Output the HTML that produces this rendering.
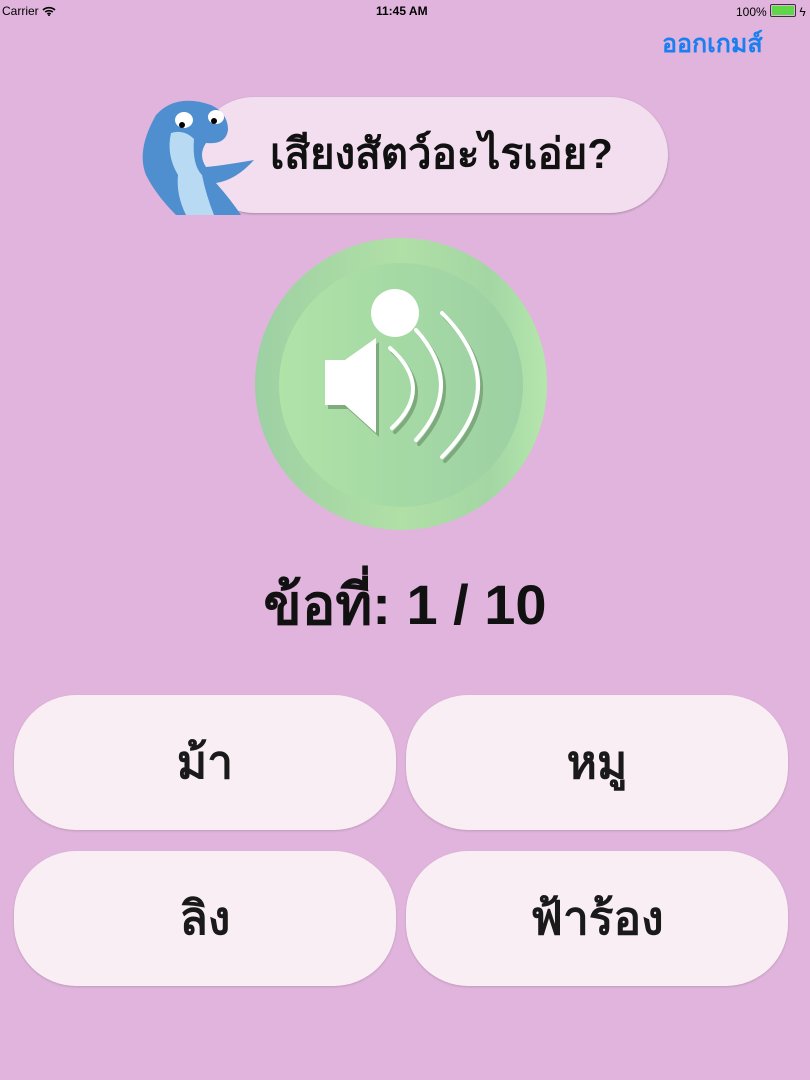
<!DOCTYPE html>
<html><head><meta charset="utf-8">
<style>
html,body{margin:0;padding:0}
body{width:810px;height:1080px;background:#e0b4dc;position:relative;overflow:hidden;font-family:"Liberation Sans","Noto Sans CJK SC",sans-serif}
.sb{position:absolute;top:4px;font-size:12px;color:#000}
.btn{position:absolute;width:382px;height:135px;border-radius:62px;background:#f9eef4;box-shadow:0 1px 2px rgba(0,0,0,.15);display:flex;align-items:center;justify-content:center;font-size:46px;font-weight:bold;color:#1a1a1a}
</style></head><body>
<div class="sb" style="left:2px">Carrier <svg width="14" height="10" viewBox="0 0 14 10" style="vertical-align:-1px"><path d="M1 4a9 9 0 0 1 12 0M3.2 6a6 6 0 0 1 7.6 0M5.3 8a3 3 0 0 1 3.4 0" stroke="#000" stroke-width="1.6" fill="none"/><circle cx="7" cy="9.3" r="0.9"/></svg></div>
<div class="sb" style="left:376px;font-weight:bold">11:45 AM</div>
<div class="sb" style="left:736px">100% <span style="display:inline-block;width:22px;height:9px;border:1px solid #333;border-radius:2px;vertical-align:-1px;padding:1px;box-sizing:content-box"><span style="display:block;width:100%;height:100%;background:#5fd548"></span></span> ϟ</div>
<div style="position:absolute;left:662px;top:24px;font-size:25px;color:#1a7ff0;font-weight:bold">ออกเกมส์</div>

<div style="position:absolute;left:196px;top:97px;width:472px;height:116px;border-radius:58px;background:#f3def0;box-shadow:0 1px 2px rgba(0,0,0,.25)"></div>
<div style="position:absolute;left:270px;top:126px;font-size:42px;font-weight:bold;color:#111;line-height:56px">เสียงสัตว์อะไรเอ่ย?</div>
<svg style="position:absolute;left:136px;top:95px" width="130" height="122" viewBox="0 0 130 122">
<path d="M20 20 Q40 -2 75 10 Q92 18 92 35 Q90 50 70 48 Q62 60 70 72 Q90 70 118 65 Q100 85 80 88 Q95 105 105 120 L40 120 Q20 100 10 80 Q0 55 20 20Z" fill="#4f8fd0"/>
<path d="M35 38 Q48 34 58 44 Q56 70 66 80 Q70 100 78 120 L50 120 Q40 100 42 80 Q30 60 35 38Z" fill="#b8daf2"/>
<ellipse cx="48" cy="25" rx="9" ry="8" fill="#fff"/><ellipse cx="80" cy="22" rx="8" ry="7" fill="#fff"/>
<circle cx="46" cy="30" r="3" fill="#000"/><circle cx="78" cy="26" r="3" fill="#000"/>
</svg>

<div style="position:absolute;left:255px;top:238px;width:292px;height:292px;border-radius:50%;background:linear-gradient(90deg,#9dd0a3,#b1e0a6 50%,#a3d6a4 80%,#b5e6ac)"></div>
<div style="position:absolute;left:279px;top:263px;width:244px;height:244px;border-radius:50%;background:linear-gradient(90deg,#b0e3a8,#a5d9a4 50%,#9dd0a3)"></div>
<svg style="position:absolute;left:255px;top:238px" width="292" height="292" viewBox="255 238 292 292">
<g transform="translate(3,4)" fill="#7aa579" stroke="#7aa579" opacity=".9">
<path d="M325 360h20l31 -22v95l-31 -28h-20z" stroke="none"/>
<g fill="none" stroke-width="4" stroke-linecap="round"><path d="M390 348Q435 388 392 428"/><path d="M416 330Q466 385 416 440"/><path d="M442 313Q514 385 442 457"/></g>
</g>
<path d="M325 360h20l31 -22v95l-31 -28h-20z" fill="#fff"/>
<g fill="none" stroke="#fff" stroke-width="4" stroke-linecap="round"><path d="M390 348Q435 388 392 428"/><path d="M416 330Q466 385 416 440"/><path d="M442 313Q514 385 442 457"/></g>
<circle cx="395" cy="313" r="24" fill="#fff"/>
</svg>

<div style="position:absolute;left:0;width:810px;top:568px;text-align:center;font-size:56px;font-weight:bold;color:#111;line-height:74px">ข้อที่: 1 / 10</div>

<div class="btn" style="left:14px;top:695px">ม้า</div>
<div class="btn" style="left:406px;top:695px">หมู</div>
<div class="btn" style="left:14px;top:851px">ลิง</div>
<div class="btn" style="left:406px;top:851px">ฟ้าร้อง</div>
</body></html>
